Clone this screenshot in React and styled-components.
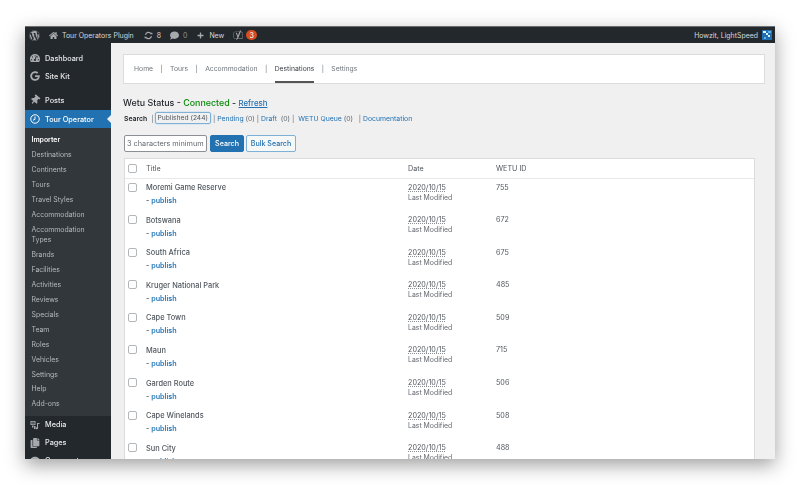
import React from "react";
import styled, { createGlobalStyle } from "styled-components";
import { FaWordpress, FaHome, FaComment, FaPlus, FaThumbtack, FaCopy, FaTachometerAlt, FaGoogle, FaYoast } from "react-icons/fa";

const GlobalStyle = createGlobalStyle`
  html, body { margin: 0; padding: 0; background: #fff; }
  * { box-sizing: border-box; }
  body { font-family: Inter, "Liberation Sans", sans-serif; color: #3c434a; }
`;

const Page = styled.div`
  width: 800px;
  height: 485px;
  padding: 26px 25px;
  overflow: hidden;
`;

const Frame = styled.div`
  width: 750px;
  height: 433px;
  display: flex;
  flex-direction: column;
  overflow: hidden;
  background: #f0f0f1;
  box-shadow: 0 6px 18px rgba(0, 0, 0, 0.38);
  filter: blur(0.3px);
`;

const TopBar = styled.div`
  height: 17px;
  flex: none;
  display: flex;
  align-items: center;
  background: #23282d;
  border-top: 1px solid #6b6e70;
  color: #d6d8da;
  font-size: 6.95px;
  padding: 0 3px 0 4px;
`;

const TopItem = styled.span`
  display: flex;
  align-items: center;
  gap: ${(p) => p.$gap || 4}px;
  margin-right: ${(p) => p.$mr || 0}px;
  color: ${(p) => (p.$dim ? "#8c8f94" : "inherit")};
  svg { color: #a7aaad; flex: none; }
`;

const Badge = styled.span`
  width: 11px;
  height: 10px;
  border-radius: 5px;
  background: #d54e21;
  color: #fff;
  font-size: 7px;
  display: flex;
  align-items: center;
  justify-content: center;
`;

const Spacer = styled.div`
  flex: 1;
`;

const Body = styled.div`
  flex: 1;
  display: flex;
  min-height: 0;
`;

const Sidebar = styled.nav`
  width: 86px;
  flex: none;
  background: #23282d;
  padding-top: 6px;
  color: #e6e7e8;
  font-size: 7.3px;
  font-weight: 500;
`;

const MenuItem = styled.div`
  position: relative;
  height: 18px;
  display: flex;
  align-items: center;
  gap: 5px;
  padding-left: 5px;
  margin-bottom: ${(p) => p.$mb || 0}px;
  background: ${(p) => (p.$active ? "#2271b1" : "transparent")};
  color: ${(p) => (p.$active ? "#fff" : "inherit")};
  svg { width: 10px; height: 10px; flex: none; color: ${(p) => (p.$active ? "#fff" : "#a7aaad")}; }
  ${(p) => p.$active && `
    &::after {
      content: "";
      position: absolute;
      right: 0;
      top: 5px;
      border: 4px solid transparent;
      border-right-color: #f0f0f1;
    }
  `}
`;

const Pin = styled(FaThumbtack)`
  transform: rotate(40deg);
`;

const SubMenu = styled.div`
  background: #32373c;
  padding: 5px 0 4px;
`;

const SubItem = styled.div`
  padding: 2.48px 6.5px;
  font-size: 6.9px;
  line-height: 10px;
  color: ${(p) => (p.$current ? "#fff" : "#b4b9be")};
  font-weight: ${(p) => (p.$current ? 600 : 400)};
`;

const Main = styled.main`
  flex: 1;
  min-width: 0;
  padding: 11px 10px 0 12px;
`;

const TabCard = styled.div`
  height: 29.5px;
  display: flex;
  align-items: stretch;
  padding-left: 10px;
  background: #fff;
  border: 1px solid #dcdcde;
  font-size: 6.8px;
  color: #646970;
`;

const Tab = styled.span`
  display: flex;
  align-items: center;
  color: ${(p) => (p.$on ? "#3c434a" : "#72777c")};
  border-bottom: 2px solid ${(p) => (p.$on ? "#555" : "transparent")};
  border-top: 2px solid transparent;
`;

const TabSep = styled.span`
  display: flex;
  align-items: center;
  width: 17px;
  justify-content: center;
  color: #72777c;
`;

const Status = styled.h2`
  margin: 13px 0 0;
  font-size: 8.9px;
  line-height: 12px;
  font-weight: 500;
  color: #23282d;
`;

const Connected = styled.span`
  color: #0a8a0a;
`;

const StatusLink = styled.a`
  color: #2271b1;
  font-size: 7.8px;
  text-decoration: underline;
`;

const Filters = styled.div`
  display: flex;
  align-items: center;
  margin: 2.5px 0 0 1px;
  height: 14px;
  font-size: 6.85px;
  color: #646970;
  white-space: pre;
`;

const FilterLabel = styled.strong`
  color: #23282d;
  font-weight: 600;
  margin-right: 4px;
`;

const Pill = styled.span`
  display: flex;
  align-items: center;
  height: 12px;
  border: 1px solid #7fb0d6;
  border-radius: 2px;
  padding: 0 2px;
  margin: 0 2px 0 1px;
  font-size: 6.7px;
  color: #50575e;
  box-shadow: 0 0 0 0.5px #c5dcee;
`;

const FLink = styled.a`
  color: #2271b1;
  margin-left: ${(p) => p.$ml || 0}px;
`;

const SearchRow = styled.div`
  display: flex;
  gap: 2px;
  margin: 9.5px 0 0 1px;
  height: 17px;
`;

const SearchInput = styled.input`
  width: 83px;
  margin-right: 1px;
  padding: 0 2px;
  border: 1px solid #8c8f94;
  border-radius: 2px;
  background: #fff;
  font: 7.3px Inter, "Liberation Sans", sans-serif;
  &::placeholder { color: #646970; opacity: 1; }
`;

const Btn = styled.button`
  padding: 0;
  width: ${(p) => p.$w}px;
  border: 1px solid ${(p) => (p.$primary ? "#2271b1" : "#7fb0d6")};
  border-radius: 2px;
  background: ${(p) => (p.$primary ? "#2271b1" : "#f6f7f7")};
  color: ${(p) => (p.$primary ? "#fff" : "#2271b1")};
  font: 500 7.1px Inter, "Liberation Sans", sans-serif;
`;

const Table = styled.div`
  margin: 6px 0 0 1px;
  width: 631px;
  background: #fff;
  border: 1px solid #dcdcde;
  border-bottom: 0;
  font-size: 7.2px;
`;

const Row = styled.div`
  display: grid;
  grid-template-columns: 21px 262px 88px 1fr;
  height: ${(p) => (p.$head ? "20px" : "32.6px")};
  align-items: ${(p) => (p.$head ? "center" : "start")};
  padding-top: ${(p) => (p.$head ? 0 : 4)}px;
  ${(p) => p.$head && "border-bottom: 1px solid #e8e8e8;"}
  color: #50575e;
`;

const Check = styled.span`
  display: block;
  width: 9px;
  height: 9px;
  margin-left: 3px;
  background: #fff;
  border: 1px solid #b4b7ba;
  border-radius: 2px;
`;

const RowName = styled.div`
  margin-top: 0.5px;
  font-weight: 500;
  font-size: 7.4px;
  color: #50575e;
  line-height: 10px;
`;

const Publish = styled.div`
  margin-top: 3px;
  line-height: 10px;
  font-weight: 600;
  color: #50575e;
  span { color: #2a7ab8; }
`;

const DateVal = styled.div`
  line-height: 10px;
  text-decoration: underline dotted #8c8f94;
  color: #50575e;
`;

const DateNote = styled.div`
  font-size: 6.9px;
  line-height: 10px;
  color: #646970;
`;

const Wetu = styled.div`
  line-height: 10px;
`;

const submenu = ["Destinations", "Continents", "Tours", "Travel Styles", "Accommodation", "Accommodation Types", "Brands", "Facilities", "Activities", "Reviews", "Specials", "Team", "Roles", "Vehicles", "Settings", "Help", "Add-ons"];

const rows = [
  ["Moremi Game Reserve", 755],
  ["Botswana", 672],
  ["South Africa", 675],
  ["Kruger National Park", 485],
  ["Cape Town", 509],
  ["Maun", 715],
  ["Garden Route", 506],
  ["Cape Winelands", 508],
  ["Sun City", 488],
];

const Avatar = () => (
  <svg width="10" height="10" viewBox="0 0 10 10">
    <rect width="10" height="10" fill="#1f6fb5" />
    <path d="M1 1h3v2h2v2h2v2H6V5H4V3H1z" fill="#dff1ff" />
    <path d="M6 1h3v2H6zM2 7h2v2H2z" fill="#5fb0e6" />
  </svg>
);

const UpdatesIcon = () => (
  <svg width="9" height="9" viewBox="0 0 18 18" fill="none" stroke="currentColor" strokeWidth="2.4">
    <path d="M3 7.5a6.2 6.2 0 0 1 11-2.2M15 10.5a6.2 6.2 0 0 1-11 2.2" />
    <path d="M17.5 6.5l-5-.2 3.4-3.6zM.5 11.5l5 .2-3.4 3.6z" fill="currentColor" stroke="none" />
  </svg>
);

const CompassIcon = () => (
  <svg viewBox="0 0 20 20" fill="none" stroke="currentColor" strokeWidth="2">
    <circle cx="10" cy="10" r="8.5" />
    <path d="M10 5v5.5l-4 2" />
  </svg>
);

const MediaIcon = () => (
  <svg viewBox="0 0 20 20" fill="currentColor">
    <path d="M1 2h10v8H1zM3 3.5v5h6v-5z" fillRule="evenodd" />
    <circle cx="6" cy="6" r="1.5" />
    <path d="M8 12h3v6H8zM4 11h3v4H4zM14 6h5v2h-3v8.5a2.2 2.2 0 1 1-2-2.2z" />
  </svg>
);

export default function App() {
  return (
    <Page>
      <GlobalStyle />
      <Frame>
        <TopBar>
          <TopItem $mr={9}><FaWordpress size={11} /></TopItem>
          <TopItem $mr={10}><FaHome size={9} />Tour Operators Plugin</TopItem>
          <TopItem $mr={9}><UpdatesIcon />8</TopItem>
          <TopItem $mr={10} $dim><FaComment size={9} />0</TopItem>
          <TopItem $mr={9} $gap={5}><FaPlus size={7} />New</TopItem>
          <TopItem $gap={3}><FaYoast size={10} /><Badge>3</Badge></TopItem>
          <Spacer />
          <TopItem><span>Howzit, LightSpeed</span><Avatar /></TopItem>
        </TopBar>
        <Body>
          <Sidebar>
            <MenuItem><FaTachometerAlt />Dashboard</MenuItem>
            <MenuItem $mb={6}><FaGoogle />Site Kit</MenuItem>
            <MenuItem $mb={1}><Pin />Posts</MenuItem>
            <MenuItem $active><CompassIcon />Tour Operator</MenuItem>
            <SubMenu>
              <SubItem $current>Importer</SubItem>
              {submenu.map((s) => <SubItem key={s}>{s}</SubItem>)}
            </SubMenu>
            <MenuItem><MediaIcon />Media</MenuItem>
            <MenuItem><FaCopy />Pages</MenuItem>
            <MenuItem><FaComment />Comments</MenuItem>
          </Sidebar>
          <Main>
            <TabCard>
              <Tab>Home</Tab><TabSep>|</TabSep>
              <Tab>Tours</Tab><TabSep>|</TabSep>
              <Tab>Accommodation</Tab><TabSep>|</TabSep>
              <Tab $on>Destinations</Tab><TabSep>|</TabSep>
              <Tab>Settings</Tab>
            </TabCard>
            <Status>Wetu Status - <Connected>Connected</Connected> - <StatusLink>Refresh</StatusLink></Status>
            <Filters>
              <FilterLabel>Search</FilterLabel>|
              <Pill>Published (244)</Pill>| <FLink>Pending</FLink> (0) | <FLink>Draft</FLink>  (0) | <FLink $ml={2}>WETU Queue</FLink> (0)   | <FLink>Documentation</FLink>
            </Filters>
            <SearchRow>
              <SearchInput placeholder="3 characters minimum" />
              <Btn $primary $w={34}>Search</Btn>
              <Btn $w={50}>Bulk Search</Btn>
            </SearchRow>
            <Table>
              <Row $head>
                <Check />
                <span>Title</span>
                <span>Date</span>
                <span>WETU ID</span>
              </Row>
              {rows.map(([name, id]) => (
                <Row key={name}>
                  <Check />
                  <div>
                    <RowName>{name}</RowName>
                    <Publish>- <span>publish</span></Publish>
                  </div>
                  <div>
                    <DateVal>2020/10/15</DateVal>
                    <DateNote>Last Modified</DateNote>
                  </div>
                  <Wetu>{id}</Wetu>
                </Row>
              ))}
            </Table>
          </Main>
        </Body>
      </Frame>
    </Page>
  );
}
